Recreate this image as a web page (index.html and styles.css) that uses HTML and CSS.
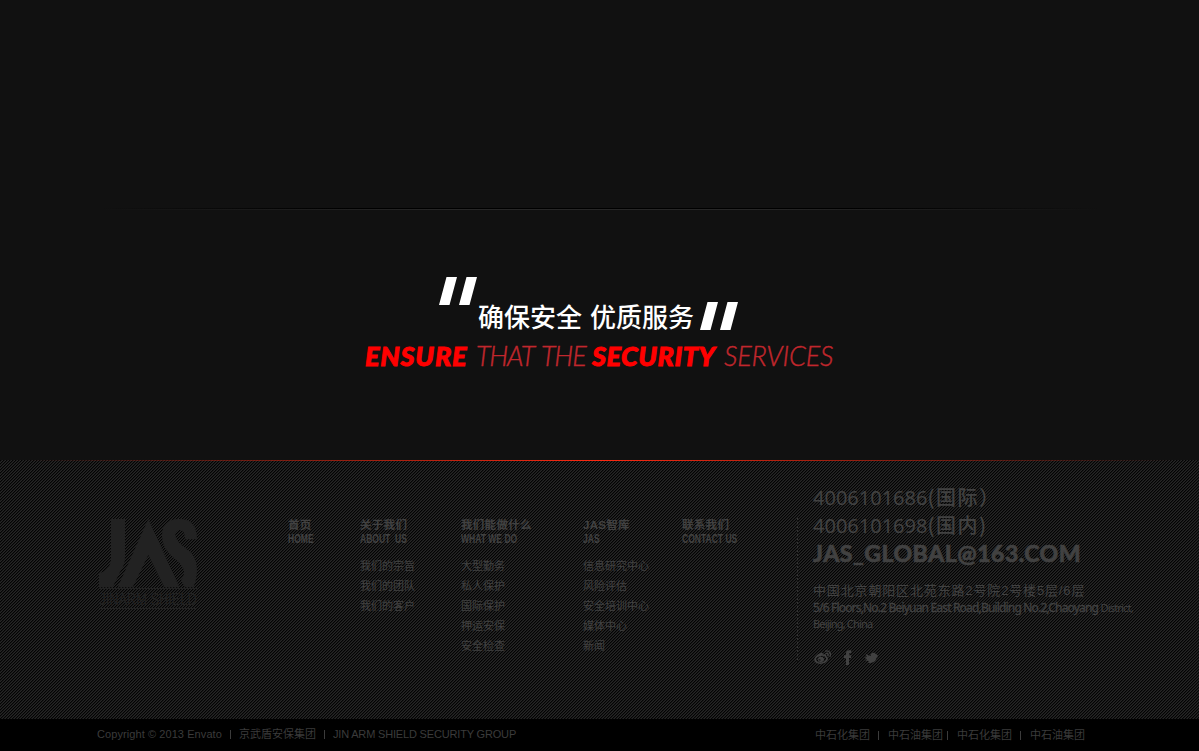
FILE: index.html
```html
<!DOCTYPE html>
<html lang="zh-CN">
<head>
<meta charset="utf-8">
<title>JAS</title>
<link rel="stylesheet" href="styles.css">
</head>
<body>
<main class="hero">
  <div class="rule"></div>
  <div class="quote">
    <svg class="mark open" width="38" height="28" viewBox="0 0 38 28"><path d="M7.500 0H18L10.500 28H0ZM27.500 0H38L30.500 28H20Z"/></svg>
    <h1 class="cn"><span>确保安全</span><span>优质服务</span></h1>
    <svg class="mark close" width="38" height="28" viewBox="0 0 38 28"><path d="M7.500 0H18L10.500 28H0ZM27.500 0H38L30.500 28H20Z"/></svg>
  </div>
  <p class="en"><b class="w1">ENSURE</b><i class="w2">THAT THE</i><b class="w3">SECURITY</b><i class="w4">SERVICES</i></p>
</main>
<footer>
  <div class="panel">
    <svg class="logo" width="100" height="94" viewBox="54 54 300 282">
      <path d="M93 57H135V172Q135 195 120 216L98 262H57V219Q93 213 93 172Z"/>
      <path d="M205 57L298 262H253L205 165L158 262H113Z"/>
      <path d="M246 108Q246 57 298 57Q351 57 351 118H315Q315 90 299 90Q286 91 286 105Q286 123 315 143Q351 166 351 206Q351 238 340 262H315L303 239Q312 231 312 216Q312 197 281 173Q246 145 246 108Z"/>
      <path d="M57 264H351V267H57ZM57 324H351V327H57Z"/>
      <text x="58" y="316" textLength="292" lengthAdjust="spacingAndGlyphs">JINARM SHIELD</text>
    </svg>
    <nav>
      <section class="c1"><h2>首页</h2><h3>HOME</h3></section>
      <section class="c2"><h2>关于我们</h2><h3>ABOUT&nbsp; US</h3><ul><li>我们的宗旨</li><li>我们的团队</li><li>我们的客户</li></ul></section>
      <section class="c3"><h2>我们能做什么</h2><h3>WHAT WE DO</h3><ul><li>大型勤务</li><li>私人保护</li><li>国际保护</li><li>押运安保</li><li>安全检查</li></ul></section>
      <section class="c4"><h2>JAS智库</h2><h3>JAS</h3><ul><li>信息研究中心</li><li>风险评估</li><li>安全培训中心</li><li>媒体中心</li><li>新闻</li></ul></section>
      <section class="c5"><h2>联系我们</h2><h3>CONTACT US</h3></section>
    </nav>
    <div class="sep"></div>
    <address>
      <p class="tel">4006101686<span>(国际）</span></p>
      <p class="tel">4006101698<span>(国内)</span></p>
      <p class="mail">JAS_GLOBAL@163.COM</p>
      <p class="addr">中国北京朝阳区北苑东路2号院2号楼5层/6层</p>
      <p class="street"><b>5/6 Floors,No.2 Beiyuan East Road,Building No.2,Chaoyang</b> <span>District,</span></p>
      <p class="street city">Beijing, China</p>
      <div class="social">
        <svg width="18" height="15" viewBox="0 0 18 15"><path fill-rule="evenodd" d="M6.500 3C8 2.300 9.200 2.800 8.800 4.600C11 3.800 12.500 4.400 12 6.200C14 7 14.400 8.600 13.500 10.300C11.500 14 5 15 1.800 12.500C-2 9.500 2 5 6.500 3ZM7 5.900C4 6.100 1.800 7.800 2 9.800C2.200 11.600 4.600 12.700 7.300 12.300C10.200 12 12.300 10.400 12.100 8.500C11.900 6.700 9.700 5.700 7 5.900Z"/><path fill-rule="evenodd" d="M7 6.800A3.200 2.700 0 1 1 6.900 6.800ZM5.600 8.900A1 .9 0 1 0 5.700 8.900Z"/><path class="wave" d="M11.600 1.100C14.900 .3 17.300 3.300 16.100 6.300M12 3.500C13.700 3.200 14.500 4.400 14 5.800"/></svg>
        <svg width="8" height="15" viewBox="0 0 8 15"><path d="M2 15V8H0V5.200H2V3.500C2 1.200 3.200 .3 5.200 .3H7.300V3H6C5.200 3 5 3.300 5 4V5.200H7.300L7 8H5V15Z"/></svg>
        <svg width="15" height="12" viewBox="0 0 15 12"><path d="M1.500 1.500C3 3.200 5 3.900 6.500 4C6.700 2 8 .8 9.500 .8C10.600 .8 11.300 1.200 11.800 2L14 3.200L13 4.200L14.500 4.900L12.600 5.600C12 10 7 12.300 3.500 10.300C4.300 10 4.800 9.700 5.200 9L1 8.500L3 7.200L.3 5.700L2.700 5.100Z"/></svg>
      </div>
    </address>
  </div>
  <div class="bar">
    <div class="copy"><span class="l1">Copyright © 2013 Envato</span><em></em><span class="l2">京武盾安保集团</span><em></em><span class="l3">JIN ARM SHIELD SECURITY GROUP</span></div>
    <div class="links"><span>中石化集团</span><em></em><span>中石油集团</span><em class="tight"></em><span>中石化集团</span><em></em><span>中石油集团</span></div>
  </div>
</footer>
</body>
</html>
```
FILE: styles.css
```css
* { box-sizing: border-box; }
body, h1, h2, h3, p, ul { margin: 0; padding: 0; }
body { width: 1199px; height: 751px; overflow: hidden; background: #111; font-family: "Liberation Sans", "Noto Sans CJK SC", sans-serif; }
ul { list-style: none; }
.hero { height: 460px; padding-top: 208px; }
.rule { height: 2px; margin: 0 100px; background: linear-gradient(90deg, #111, #000 25%, #000 75%, #111) top / 100% 1px no-repeat, linear-gradient(90deg, #111, #272727 35%, #272727 65%, #111) bottom / 100% 1px no-repeat; }
.quote { display: flex; height: 55px; margin: 65px 0 0 439px; padding-top: 2px; }
.mark { fill: #fff; flex: none; }
.open { margin-right: 1px; }
.close { margin: 25px 0 0 6px; }
.cn { display: flex; gap: 8px; padding-top: 22px; font: 500 26px/34px "Noto Sans CJK SC", sans-serif; color: #fff; white-space: nowrap; }
.en { display: flex; height: 34px; margin: 9px 0 0 365px; font: italic 27px/34px Lato, sans-serif; white-space: nowrap; }
.en b { font-weight: 900; color: #f00; -webkit-text-stroke: .9px #f00; }
.en i { font-weight: 300; color: #c1272d; -webkit-text-stroke: .4px #c1272d; }
.w1 { width: 111px; letter-spacing: .8px; }
.w2 { width: 116px; letter-spacing: -1.1px; word-spacing: 3px; }
.w3 { width: 132px; letter-spacing: .5px; }
.w4 { letter-spacing: -.2px; }

.panel { display: flex; height: 259px; padding-left: 98px; background: linear-gradient(90deg, rgba(200,30,10,0) 2%, #b5210f 35%, #ff2a12 50%, #b5210f 65%, rgba(200,30,10,0) 98%) top / 100% 1px no-repeat, url("data:image/svg+xml,%3Csvg xmlns='http://www.w3.org/2000/svg' width='3' height='3' shape-rendering='crispEdges'%3E%3Crect width='3' height='3' fill='%23030303'/%3E%3Cpath fill='%23262626' d='M2 0h1v1H2zM1 1h1v1H1zM0 2h1v1H0z'/%3E%3Cpath fill='%23181818' d='M1 0h1v1H1zM0 1h1v1H0zM2 2h1v1H2z'/%3E%3C/svg%3E"); color: #414141; }
.logo { margin-top: 58px; fill: #222; flex: none; overflow: visible; }
.logo text { font: 48px/1 "Liberation Sans", sans-serif; }
nav { display: grid; grid-template-columns: 72px 101px 122px 99px 115px; margin: 57px 0 0 90px; }
h2 { font: 700 11.500px/16px "Liberation Sans", "Noto Sans CJK SC", sans-serif; letter-spacing: .3px; white-space: nowrap; }
h3 { width: max-content; font: 700 12px/12px "Liberation Sans", sans-serif; white-space: nowrap; transform: scaleX(.71); transform-origin: 0 0; }
nav ul { padding-top: 9.500px; }
nav li { font: 11px/20px "Noto Sans CJK SC", sans-serif; white-space: nowrap; }
.sep { width: 1px; height: 144px; margin-top: 58px; background: repeating-linear-gradient(#333 0 2px, #111 2px 4px); flex: none; }
address { width: 350px; padding: 24px 0 0 15px; font-style: normal; white-space: nowrap; }
.tel { font: 20px/28px "Noto Sans", sans-serif; letter-spacing: 0; }
.tel span { font: 500 20px/20px "Noto Sans CJK SC", sans-serif; letter-spacing: 1.500px; }
.mail { font: 900 23px/27px Lato, sans-serif; letter-spacing: .5px; -webkit-text-stroke: .6px #414141; }
.addr { margin-top: 15px; font: 13px/18px "Liberation Sans", "Noto Sans CJK SC", sans-serif; letter-spacing: .85px; }
.street { font: 12px/16px "Noto Sans", sans-serif; letter-spacing: -.82px; }
.street b { font-weight: 400; -webkit-text-stroke: .3px #414141; }
.street span { font-size: 11px; }
.city { font-size: 11px; }
.social { display: flex; align-items: center; gap: 12px; height: 15px; margin: 18px 0 0 1px; fill: #414141; }
.wave { fill: none; stroke: #414141; stroke-width: 1.300; stroke-linecap: round; }

.bar { display: flex; justify-content: space-between; height: 32px; padding: 0 114px 0 97px; background: #000; color: #3b3b3b; font: 11px/32px "Liberation Sans", "Noto Sans CJK SC", sans-serif; white-space: nowrap; }
.copy, .links { display: flex; align-items: center; }
.copy { height: 30px; }
.l1 { letter-spacing: .08px; }
.l3 { letter-spacing: -.17px; }
.bar em { width: 1px; height: 9px; background: #3b3b3b; margin: 0 8px; }
.links em { margin: 0 9px 0 8px; }
.links em.tight { margin: 0 9px 0 4px; }
```
